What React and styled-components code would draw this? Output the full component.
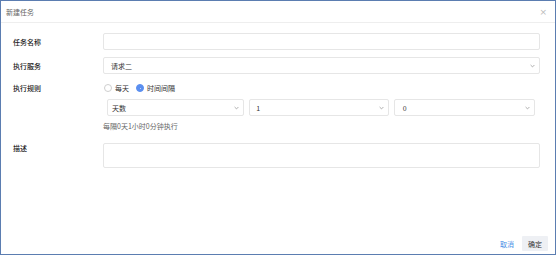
import React from "react";
import styled, { createGlobalStyle } from "styled-components";

const GlobalStyle = createGlobalStyle`
  html, body {
    margin: 0;
    padding: 0;
    background: #ffffff;
  }
  body {
    font-family: "Noto Sans CJK SC", "Noto Sans", sans-serif;
    font-size: 7px;
    color: #333;
  }
`;

const Dialog = styled.div`
  width: 556px;
  height: 255px;
  box-sizing: border-box;
  border: 1px solid #5b7db1;
  background: #fff;
  display: flex;
  flex-direction: column;
`;

const Header = styled.div`
  height: 22px;
  box-sizing: border-box;
  border-bottom: 1px solid #eeeeee;
  padding: 0 8px 0 5px;
  display: flex;
  align-items: center;
  justify-content: space-between;
`;

const Title = styled.span`
  color: #666;
  font-size: 7px;
  line-height: 10px;
`;

const Close = styled.span`
  color: #bbb;
  font-size: 9px;
  line-height: 10px;
  font-family: "DejaVu Sans", sans-serif;
`;

const Body = styled.div`
  padding: 10px 15px 0 12px;
  display: flex;
  flex-direction: column;
`;

const Row = styled.div`
  display: flex;
  align-items: ${(p) => (p.$top ? "flex-start" : "center")};
  margin-bottom: ${(p) => p.$gap ?? 7}px;
`;

const Label = styled.div`
  width: 90px;
  flex: none;
  color: #222;
  font-weight: 500;
  line-height: ${(p) => p.$lh ?? 10}px;
`;

const Field = styled.div`
  flex: 1;
  min-width: 0;
`;

const Input = styled.div`
  height: 17px;
  box-sizing: border-box;
  border: 1px solid #e6e6e6;
  border-radius: 2px;
  background: #fff;
`;

const Textarea = styled(Input)`
  height: 25px;
`;

const Select = styled.div`
  height: 17px;
  box-sizing: border-box;
  border: 1px solid #e6e6e6;
  border-radius: 2px;
  padding: 0 4px 0 ${(p) => p.$pad ?? 6}px;
  display: flex;
  align-items: center;
  justify-content: space-between;
  flex: ${(p) => (p.$grow ? 1 : "none")};
  min-width: 0;
  color: #333;
  line-height: 10px;
`;

const Chevron = () => (
  <svg width="5" height="4" viewBox="0 0 5 4">
    <path d="M0.6 1 L2.5 2.9 L4.4 1" fill="none" stroke="#999" strokeWidth="0.8" />
  </svg>
);

const RadioGroup = styled.div`
  display: flex;
  align-items: center;
  height: 14px;
  padding-left: 1px;
  gap: 7px;
`;

const RadioItem = styled.label`
  display: flex;
  align-items: center;
  gap: 3px;
  color: #333;
  line-height: 10px;
`;

const Dot = styled.span`
  width: 8px;
  height: 8px;
  box-sizing: border-box;
  border-radius: 50%;
  border: 1px solid ${(p) => (p.$on ? "#5b8ff0" : "#cfcfcf")};
  background: ${(p) => (p.$on ? "#5b8ff0" : "#fff")};
  display: flex;
  align-items: center;
  justify-content: center;
  &::after {
    content: "";
    width: 1px;
    height: 1px;
    border-radius: 50%;
    background: ${(p) => (p.$on ? "#dfe9fc" : "transparent")};
  }
`;

const SelectRow = styled.div`
  display: flex;
  gap: 5px;
  padding: 0 5px 0 4px;
  margin-top: 4px;
`;

const Hint = styled.div`
  color: #666;
  line-height: 9px;
  margin-top: 6px;
`;

const Footer = styled.div`
  margin-top: auto;
  display: flex;
  justify-content: flex-end;
  align-items: center;
  gap: 8px;
  padding: 0 7px 3px 0;
`;

const Cancel = styled.span`
  color: #4a8fe6;
  line-height: 10px;
`;

const Confirm = styled.span`
  width: 26px;
  height: 15px;
  background: #eef0f4;
  border-radius: 1px;
  color: #333;
  display: flex;
  align-items: center;
  justify-content: center;
  line-height: 10px;
`;

export default function App() {
  return (
    <>
      <GlobalStyle />
      <Dialog>
        <Header>
          <Title>新建任务</Title>
          <Close>×</Close>
        </Header>
        <Body>
          <Row>
            <Label>任务名称</Label>
            <Field>
              <Input />
            </Field>
          </Row>
          <Row $gap={7}>
            <Label>执行服务</Label>
            <Field>
              <Select $pad={7}>
                <span>请求二</span>
                <Chevron />
              </Select>
            </Field>
          </Row>
          <Row $top $gap={12}>
            <Label $lh={14}>执行规则</Label>
            <Field>
              <RadioGroup>
                <RadioItem>
                  <Dot />
                  每天
                </RadioItem>
                <RadioItem>
                  <Dot $on />
                  时间间隔
                </RadioItem>
              </RadioGroup>
              <SelectRow>
                <Select $grow $pad={4}>
                  <span>天数</span>
                  <Chevron />
                </Select>
                <Select $grow>
                  <span>1</span>
                  <Chevron />
                </Select>
                <Select $grow $pad={8}>
                  <span>0</span>
                  <Chevron />
                </Select>
              </SelectRow>
              <Hint>每隔0天1小时0分钟执行</Hint>
            </Field>
          </Row>
          <Row $top>
            <Label $lh={10}>描述</Label>
            <Field>
              <Textarea />
            </Field>
          </Row>
        </Body>
        <Footer>
          <Cancel>取消</Cancel>
          <Confirm>确定</Confirm>
        </Footer>
      </Dialog>
    </>
  );
}
